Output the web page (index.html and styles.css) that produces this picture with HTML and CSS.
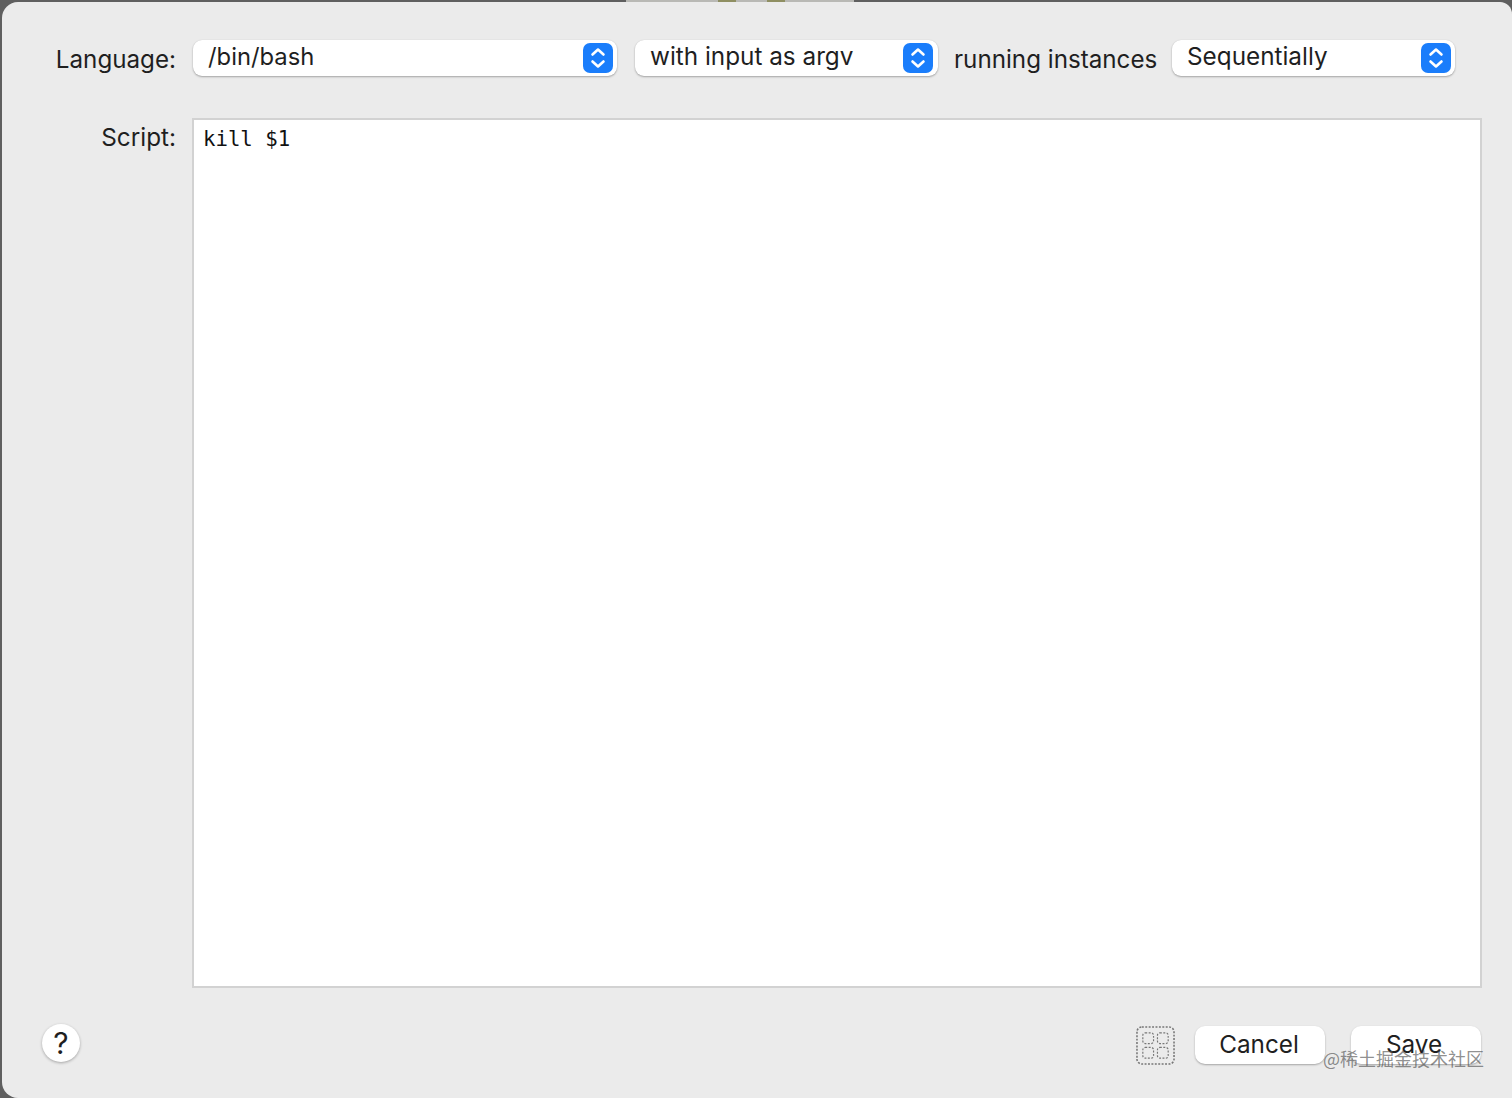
FILE: index.html
```html
<!DOCTYPE html>
<html lang="en">
<head>
<meta charset="utf-8">
<title>Script</title>
<link rel="stylesheet" href="styles.css">
</head>
<body>
<div class="behind"><i class="spot spot-a"></i><i class="spot spot-b"></i></div>
<div class="sheet">
  <div class="top-row">
    <span class="label label-lang">Language:</span>
    <div class="popup popup-lang"><span>/bin/bash</span>
      <svg class="stepper" viewBox="0 0 30 30"><rect width="30" height="30" rx="7" fill="#1a7dfb"/><path d="M9.5 11.5 15 6.5l5.500 5M9.500 18.500l5.500 5 5.500-5" fill="none" stroke="#fff" stroke-width="2.600" stroke-linecap="round" stroke-linejoin="round"/></svg>
    </div>
    <div class="popup popup-input"><span>with input as argv</span>
      <svg class="stepper" viewBox="0 0 30 30"><rect width="30" height="30" rx="7" fill="#1a7dfb"/><path d="M9.5 11.5 15 6.5l5.500 5M9.500 18.500l5.500 5 5.500-5" fill="none" stroke="#fff" stroke-width="2.600" stroke-linecap="round" stroke-linejoin="round"/></svg>
    </div>
    <span class="label label-run">running instances</span>
    <div class="popup popup-seq"><span>Sequentially</span>
      <svg class="stepper" viewBox="0 0 30 30"><rect width="30" height="30" rx="7" fill="#1a7dfb"/><path d="M9.5 11.5 15 6.5l5.500 5M9.500 18.500l5.500 5 5.500-5" fill="none" stroke="#fff" stroke-width="2.600" stroke-linecap="round" stroke-linejoin="round"/></svg>
    </div>
  </div>
  <div class="script-row">
    <span class="label label-script">Script:</span>
    <div class="editor">kill $1</div>
  </div>
  <div class="bottom-row">
    <button class="help">?</button>
    <svg class="drop-icon" viewBox="0 0 40 40" fill="none" stroke="#777" stroke-dasharray="2 1.500">
      <rect x="1" y="1" width="38" height="38" rx="5" stroke-width="1.600"/>
      <rect x="7" y="7" width="11" height="11" rx="2.500" stroke-width="1.200"/>
      <rect x="22" y="7" width="11" height="11" rx="2.500" stroke-width="1.200"/>
      <rect x="7" y="22" width="11" height="11" rx="2.500" stroke-width="1.200"/>
      <rect x="22" y="22" width="11" height="11" rx="2.500" stroke-width="1.200"/>
    </svg>
    <button class="btn btn-cancel">Cancel</button>
    <button class="btn btn-save">Save</button>
  </div>
  <div class="watermark">@稀土掘金技术社区</div>
</div>
</body>
</html>
```
FILE: styles.css
```css
* { box-sizing: border-box; }
html, body { margin: 0; padding: 0; }
body {
  position: relative;
  width: 1512px;
  height: 1098px;
  background: #5f5f5f;
  overflow: hidden;
  font-family: "Inter", "Liberation Sans", sans-serif;
  color: #1f1f1f;
}
.behind {
  position: absolute;
  left: 626px;
  top: 0;
  width: 228px;
  height: 2px;
  background: #b9b9b5;
}
.spot { position: absolute; top: 0; height: 2px; background: #8f8f62; }
.spot-a { left: 92px; width: 18px; }
.spot-b { left: 141px; width: 18px; }
.sheet {
  position: relative;
  width: 1510px;
  height: 1096px;
  margin: 2px 0 0 2px;
  background: #ebebeb;
  border-radius: 16px 12px 0 16px;
  display: flex;
  flex-direction: column;
}
.top-row {
  display: flex;
  align-items: flex-start;
  height: 116px;
  padding-top: 38px;
}
.label { font-size: 24.3px; line-height: 36px; white-space: nowrap; }
.label-lang { width: 174px; text-align: right; margin-top: 2px; font-size: 24.2px; }
.popup {
  height: 36px;
  background: #fff;
  border-radius: 9px;
  box-shadow: 0 1px 2px rgba(0,0,0,.3), 0 0 1px rgba(0,0,0,.1);
  display: flex;
  align-items: center;
  justify-content: space-between;
  font-size: 24.3px;
  padding: 0 4px 4px 15px;
  white-space: nowrap;
}
.popup-lang { width: 424px; margin-left: 17px; font-size: 23.8px; }
.popup-input { width: 303px; margin-left: 18px; padding-right: 5px; }
.popup-seq { width: 283px; margin-left: 15px; }
.label-run { width: 203px; margin: 2px 0 0 16px; font-size: 24.2px; }
.stepper { width: 30px; height: 30px; flex: none; margin-top: 4px; }
.script-row { display: flex; align-items: flex-start; height: 870px; }
.label-script { width: 174px; text-align: right; margin-top: 1px; }
.editor {
  width: 1290px;
  height: 870px;
  margin-left: 16px;
  background: #fff;
  border: 2px solid #d2d2d2;
  padding: 5px 9px;
  font-family: "DejaVu Sans Mono", monospace;
  font-size: 20.700px;
  line-height: 28px;
  color: #111;
}
.bottom-row {
  display: flex;
  align-items: flex-start;
  padding-top: 36px;
}
.help {
  width: 38px;
  height: 38px;
  margin: 0 0 0 40px;
  border: 0;
  padding: 0;
  border-radius: 50%;
  background: #fff;
  box-shadow: 0 1px 3px rgba(0,0,0,.3);
  font: 400 30px "Inter", "Liberation Sans", sans-serif;
  color: #1f1f1f;
}
.drop-icon { width: 39px; height: 39px; margin: 2px 0 0 1056px; }
.btn {
  width: 130px;
  height: 38px;
  border: 0;
  padding: 0 2px 2px 0;
  border-radius: 10px;
  background: #fff;
  box-shadow: 0 1px 2px rgba(0,0,0,.3);
  font: 24.3px "Inter", "Liberation Sans", sans-serif;
  color: #1f1f1f;
  margin-top: 2px;
}
.btn-cancel { margin-left: 20px; }
.btn-save { margin-left: 26px; padding-right: 4px; }
.watermark {
  position: absolute;
  left: 1321px;
  top: 1044px;
  font: 18px "Noto Sans CJK SC", sans-serif;
  line-height: 24px;
  color: rgba(80,80,80,.65);
  white-space: nowrap;
}
```
